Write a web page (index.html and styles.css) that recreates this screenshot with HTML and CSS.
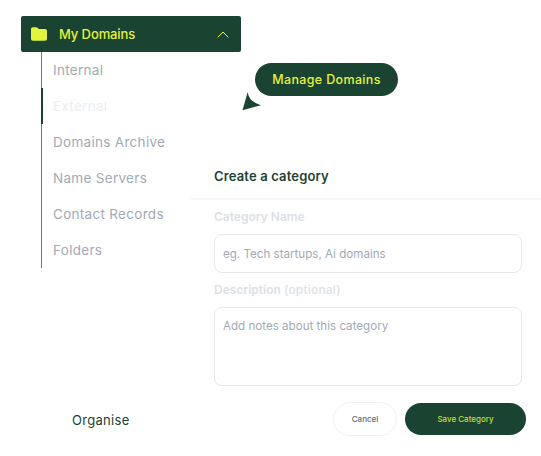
FILE: index.html
```html
<!DOCTYPE html>
<html lang="en">
<head>
    <meta charset="UTF-8">
    <title>Organise</title>
    <link rel="stylesheet" href="styles.css">
</head>
<body>

<div class="page">
    <!-- Sidebar -->
    <div class="sidebar">
        <div class="menu-head">
            <svg class="folder" width="16" height="14" viewBox="0 0 16 14">
                <path d="M0 2C0 .9.8.2 1.800.2h3.400c.6 0 1 .2 1.400.6L7.800 2H14c1.200 0 2 .8 2 2v7.800c0 1.200-.8 2-2 2H2c-1.200 0-2-.8-2-2z" fill="#e2f53c"/>
            </svg>
            <span class="menu-title">My Domains</span>
            <svg class="chevron" width="12" height="7" viewBox="0 0 12 7">
                <path d="M.7 6.300 6 1l5.300 5.300" fill="none" stroke="#e2f53c" stroke-width="1"/>
            </svg>
        </div>
        <ul class="menu">
            <li>Internal</li>
            <li class="active">External</li>
            <li>Domains Archive</li>
            <li>Name Servers</li>
            <li>Contact Records</li>
            <li>Folders</li>
        </ul>
        <div class="organise">Organise</div>
    </div>

    <!-- Kategorie anlegen -->
    <div class="panel">
        <h2>Create a category</h2>
        <div class="form">
            <label>Category Name</label>
            <div class="field field-name">eg. Tech startups, Ai domains</div>
            <label>Description <span class="optional">(optional)</span></label>
            <div class="field field-notes">Add notes about this category</div>
            <div class="actions">
                <button class="btn-cancel">Cancel</button>
                <button class="btn-save">Save Category</button>
            </div>
        </div>
    </div>

    <!-- Tooltip mit Zeiger -->
    <svg class="pointer" width="20" height="19" viewBox="0 0 20 19">
        <path d="M5.700 0Q6.500 9.500 19 13.200L.5 18.200z" fill="#1b4332"/>
    </svg>
    <div class="tooltip">Manage Domains</div>
</div>

</body>
</html>
```

FILE: styles.css
```css
/* Allgemeine Styles */
body {
    margin: 0;
    background-color: #fff;
    font-family: 'Inter', 'Open Sans', sans-serif;
    color: #1b4332;
}

.page {
    position: relative;
    display: grid;
    grid-template-columns: 191px 350px;
    width: 541px;
    height: 456px;
    overflow: hidden;
}

/* Sidebar */
.sidebar {
    padding: 16px 0 0 21px;
}

.menu-head {
    display: flex;
    align-items: center;
    box-sizing: border-box;
    width: 220px;
    height: 36px;
    padding: 0 12px 0 10px;
    background-color: #1b4332;
    border-radius: 2px;
    color: #e2f53c;
    font-size: 13px;
    font-weight: 500;
    letter-spacing: -0.1px;
}

.menu-title {
    flex: 1;
    margin-left: 12px;
}

.menu {
    list-style: none;
    margin: 0 0 0 20px;
    padding: 0;
    border-left: 1px solid #6b7280;
}

.menu li {
    height: 36px;
    line-height: 36px;
    padding-left: 11px;
    font-size: 13.500px;
    letter-spacing: 0.3px;
    color: #a3a9b5;
    white-space: nowrap;
}

.menu li.active {
    margin-left: -1px;
    padding-left: 10px;
    border-left: 2px solid #1b4332;
    color: #eceef2;
}

.organise {
    margin: 143px 0 0 51px;
    font-size: 13px;
    line-height: 18px;
    letter-spacing: 0.3px;
}

/* Panel */
.panel {
    padding-top: 168px;
}

.panel h2 {
    margin: 0;
    height: 30px;
    padding-left: 23px;
    border-bottom: 2px solid #f5f5f6;
    font-size: 13px;
    font-weight: 600;
    line-height: 17px;
    letter-spacing: 0.15px;
}

.form {
    padding: 0 19px 0 23px;
}

.form label {
    display: block;
    margin-top: 9px;
    font-size: 12px;
    font-weight: 600;
    line-height: 16px;
    color: #dcdfe5;
}

.optional {
    font-weight: 500;
    letter-spacing: 0.2px;
}

.field {
    box-sizing: border-box;
    margin-top: 9px;
    padding-left: 8px;
    border: 1px solid #e5e7eb;
    border-radius: 8px;
    font-size: 11.600px;
    color: #a3a9b5;
}

.field-name {
    height: 39px;
    line-height: 38px;
}

.field-notes {
    height: 79px;
    padding-top: 11px;
    line-height: 15px;
}

.actions {
    display: flex;
    justify-content: flex-end;
    align-items: center;
    gap: 8px;
    margin: 16px -4px 0 0;
}

.actions button {
    border-radius: 17px;
    font-family: inherit;
    font-size: 8px;
    font-weight: 500;
    padding: 0;
}

.btn-cancel {
    width: 64px;
    height: 34px;
    background-color: #fff;
    border: 1px solid #f0f1f3;
    color: #5f6b73;
}

.btn-save {
    width: 121px;
    height: 32px;
    background-color: #1b4332;
    border: none;
    color: #c5dc3a;
}

/* Tooltip */
.tooltip {
    position: absolute;
    left: 255px;
    top: 63px;
    width: 143px;
    height: 33px;
    background-color: #1b4332;
    border-radius: 17px;
    color: #e2f53c;
    font-size: 12.500px;
    font-weight: 500;
    letter-spacing: 0.35px;
    line-height: 33px;
    text-align: center;
}

.pointer {
    position: absolute;
    left: 242px;
    top: 92px;
}
```
